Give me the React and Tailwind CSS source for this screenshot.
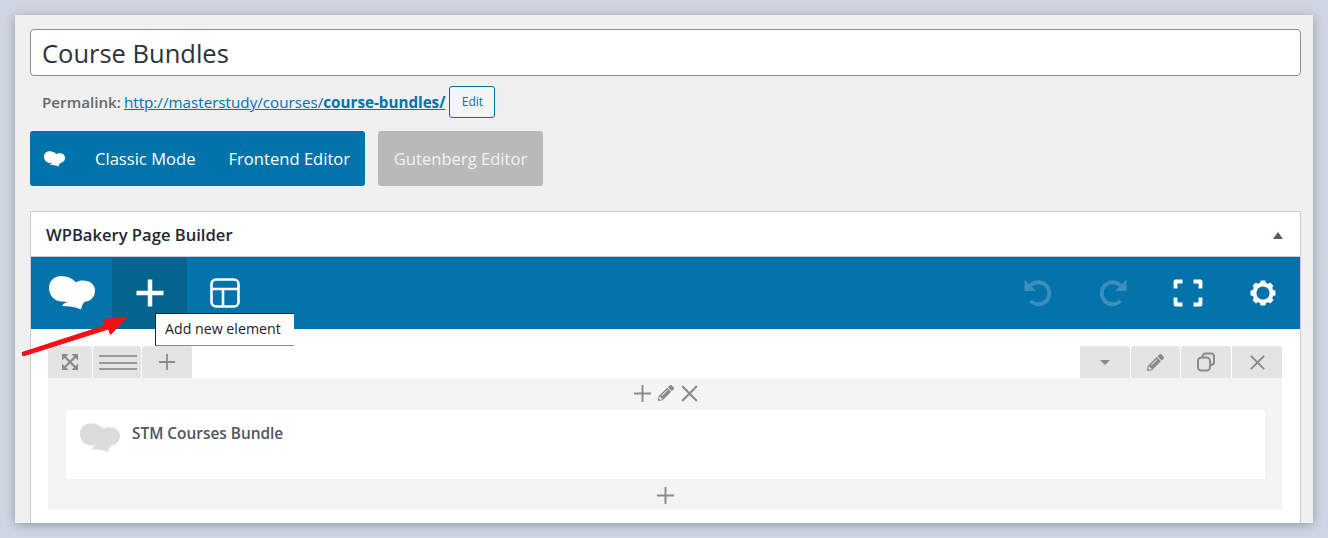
import React from "react";
import { FaPencilAlt } from "react-icons/fa";

function Chef({ className }) {
  return (
    <svg viewBox="0 0 46 34" className={className} fill="currentColor">
      <path d="M12 0C18 0 23 2 27 6.200C29 5 31 4.500 34 4.500C41 4.500 46 8.500 46 14.500C46 20.500 42 25 36.500 25.500C34 26.500 33 29.500 32 33.500C26 30.500 20 30 13.500 30C13.500 28 16 26.500 20 26C17 26 15 25.500 12 25.500C5 25 0 19 0 12C0 5 5 0 12 0Z" />
    </svg>
  );
}

function Copy() {
  return (
    <svg viewBox="0 0 20 20" className="w-[20px] h-[20px]" fill="none" stroke="currentColor" strokeWidth="2">
      <path d="M6.500 5.500V4.500a3 3 0 0 1 3-3h5.500a3 3 0 0 1 3 3v5.500a3 3 0 0 1-3 3h-1" />
      <rect x="2" y="5.500" width="12" height="13" rx="3.500" />
    </svg>
  );
}

function Close({ size = 18, w = 2 }) {
  return (
    <svg viewBox="0 0 18 18" width={size} height={size} stroke="currentColor" strokeWidth={w} fill="none">
      <path d="M2 2L16 16M16 2L2 16" />
    </svg>
  );
}

function Plus({ size = 20, w = 2 }) {
  return (
    <svg viewBox="0 0 20 20" width={size} height={size} stroke="currentColor" strokeWidth={w} fill="none">
      <path d="M10 1V19M1 10H19" />
    </svg>
  );
}

function Expand() {
  return (
    <svg viewBox="0 0 18 18" className="w-[18px] h-[18px]" fill="currentColor">
      <path d="M1 1h6.500L1 7.500zM17 1v6.500L10.500 1zM1 17v-6.500L7.500 17zM17 17h-6.500L17 10.500z" />
      <path d="M3 3L15 15M15 3L3 15" stroke="currentColor" strokeWidth="2.200" fill="none" />
    </svg>
  );
}

function Layout() {
  return (
    <svg viewBox="0 0 30 30" className="w-[30px] h-[30px]" fill="none" stroke="currentColor" strokeWidth="2.600">
      <rect x="1.500" y="1.500" width="27" height="27" rx="4.500" />
      <path d="M1.500 11H28.500M13 11V28.500" />
    </svg>
  );
}

function Undo({ flip }) {
  return (
    <svg viewBox="0 0 30 30" className={"w-[30px] h-[30px]" + (flip ? " -scale-x-100" : "")} fill="none" stroke="currentColor" strokeWidth="3.800">
      <path d="M7.500 7.500A11 11 0 1 1 7.500 23" />
      <path d="M1.500 1.500V13H13Z" fill="currentColor" stroke="none" />
    </svg>
  );
}

function FullScreen() {
  return (
    <svg viewBox="0 0 30 28" className="w-[30px] h-[28px]" fill="none" stroke="currentColor" strokeWidth="3.800" strokeLinejoin="round">
      <path d="M2.500 9.500V2.500H9.500M20.500 2.500H27.500V9.500M2.500 18.500V25.500H9.500M20.500 25.500H27.500V18.500" />
    </svg>
  );
}

function Gear() {
  const teeth = [0, 45, 90, 135, 180, 225, 270, 315];
  return (
    <svg viewBox="0 0 26 26" className="w-[26px] h-[26px]" fill="currentColor">
      {teeth.map((a) => (
        <rect key={a} x="10.300" y="0.500" width="5.400" height="5" rx="1.200" transform={`rotate(${a} 13 13)`} />
      ))}
      <circle cx="13" cy="13" r="8.600" fill="none" stroke="currentColor" strokeWidth="4" />
    </svg>
  );
}

function BarIcon({ children, active }) {
  return (
    <div className={"w-[75px] h-full flex items-center justify-center text-white " + (active ? "bg-[#056390]" : "")}>
      {children}
    </div>
  );
}

function ToolBtn({ className, children }) {
  return (
    <div className={"h-[32px] bg-[#e4e4e4] rounded-t-[2px] flex items-center justify-center text-[#8a8a8a] " + className}>
      {children}
    </div>
  );
}

export default function App() {
  return (
    <div className="relative w-[1328px] h-[538px] overflow-hidden bg-[#d0d6e2] pt-[15px] px-[15px] font-['Open_Sans','Noto_Sans',sans-serif]">
      <div className="relative h-[508px] bg-[#f0f0f1] pl-[15px] pr-[12px] pt-[14px] shadow-[0_2px_10px_rgba(70,80,100,0.45)]">
        <div className="h-[47px] bg-white border border-[#8c8f94] rounded-[4px] flex items-center pl-[11px] pt-[1px] text-[25.500px] text-[#2c3338]">
          Course Bundles
        </div>

        <div className="h-[32px] mt-[10px] flex items-center pl-[12px] text-[15.200px] text-[#646970]">
          <span className="font-semibold">Permalink:</span>
          <a className="ml-[3px] text-[#0073aa] underline">
            http://masterstudy/courses/<span className="font-bold">course-bundles/</span>
          </a>
          <div className="ml-[4px] w-[46px] h-[32px] rounded-[3px] border border-[#0071a1] bg-[#f3f5f6] text-[#0071a1] text-[12px] flex items-center justify-center">
            Edit
          </div>
        </div>

        <div className="mt-[13px] flex gap-[13px] text-[16.600px]">
          <div className="w-[335px] h-[55px] rounded-[3px] bg-[#0073aa] text-white flex items-center pl-[14px] pt-[1px]">
            <Chef className="w-[21px] h-[16px]" />
            <span className="ml-[30px]">Classic Mode</span>
            <span className="ml-[33px]">Frontend Editor</span>
          </div>
          <div className="w-[165px] h-[55px] rounded-[3px] bg-[#b9b9b9] text-[#f2f2f2] flex items-center justify-center pt-[1px]">
            Gutenberg Editor
          </div>
        </div>

        <div className="mt-[25px] h-[312px] bg-white border border-b-0 border-[#c9ccd3]">
          <div className="h-[45px] flex items-center justify-between pl-[15px] pr-[17px] pt-[2px] border-b border-[#c9ccd3] text-[16.600px] font-semibold text-[#23282d]">
            <span>WPBakery Page Builder</span>
            <span className="w-0 h-0 border-x-[5px] border-x-transparent border-b-[7px] border-b-[#555d66]" />
          </div>

          <div className="h-[72px] bg-[#0573ab] flex items-center">
            <div className="w-[81px] pl-[18px]">
              <Chef className="w-[46px] h-[34px] text-white" />
            </div>
            <BarIcon active><Plus size={30} w={3} /></BarIcon>
            <BarIcon><Layout /></BarIcon>
            <div className="ml-auto flex h-full items-center">
              <BarIcon><span className="text-[#3b8fbb]"><Undo /></span></BarIcon>
              <BarIcon><span className="text-[#3b8fbb]"><Undo flip /></span></BarIcon>
              <BarIcon><FullScreen /></BarIcon>
              <BarIcon><Gear /></BarIcon>
            </div>
          </div>

          <div className="pl-[17px] pr-[18px] pt-[17px]">
            <div className="flex justify-between">
              <div className="flex gap-[1px]">
                <ToolBtn className="w-[44px]"><Expand /></ToolBtn>
                <ToolBtn className="w-[48px]">
                  <div className="ml-[2px] mt-[1px] w-[38px] h-[15px] border-y-[2px] border-[#9a9a9a] flex items-center"><div className="w-full h-[2px] bg-[#9a9a9a]" /></div>
                </ToolBtn>
                <ToolBtn className="w-[50px]"><Plus size={18} /></ToolBtn>
              </div>
              <div className="flex gap-[1px]">
                <ToolBtn className="w-[50px]"><span className="w-0 h-0 border-x-[5px] border-x-transparent border-t-[5px] border-t-[#8a8a8a]" /></ToolBtn>
                <ToolBtn className="w-[49px]"><FaPencilAlt size={17} /></ToolBtn>
                <ToolBtn className="w-[50px]"><Copy /></ToolBtn>
                <ToolBtn className="w-[50px]"><Close size={17} /></ToolBtn>
              </div>
            </div>
            <div className="h-[132px] bg-[#f4f4f4] pl-[18px] pr-[17px] flex flex-col text-[#8a8a8a]">
              <div className="h-[32px] pb-[2px] flex items-center justify-center gap-[6px]">
                <Plus size={19} />
                <FaPencilAlt size={16} />
                <Close size={19} />
              </div>
              <div className="h-[69px] bg-white rounded-[2px] flex items-start pl-[14px] pt-[13px]">
                <Chef className="w-[40px] h-[30px] text-[#dcdcdc]" />
                <span className="ml-[12px] mt-[1px] text-[15.400px] font-semibold text-[#50565c] leading-[20px]">STM Courses Bundle</span>
              </div>
              <div className="h-[31px] pt-[2px] flex items-center justify-center">
                <Plus size={19} />
              </div>
            </div>
          </div>
        </div>
      </div>

      <div className="absolute left-[155px] top-[313px] w-[139px] h-[33px] bg-white border-t border-l border-[#222] border-b-[#8a8a8a] border-b flex items-center pl-[9px] pb-[2px] text-[14.200px] text-[#222]">
        Add new element
      </div>

      <svg className="absolute left-[20px] top-[312px]" width="110" height="46" viewBox="0 0 110 46" fill="#f40f17">
        <path d="M2 40.500L85 13.500L84 7.500L107 5L90.500 22.500L88.500 17L3 44Z" stroke="#f40f17" strokeLinejoin="round" />
      </svg>
    </div>
  );
}
